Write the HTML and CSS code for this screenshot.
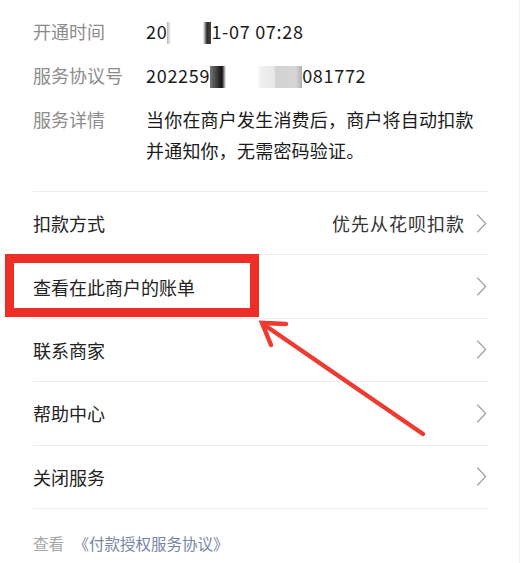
FILE: index.html
```html
<!DOCTYPE html>
<html>
<head>
  <meta charset="UTF-8">
  <title>服务详情</title>
  <link rel="stylesheet" href="styles.css">
</head>
<body>
  <div class="page">
    <div class="info">
      <div class="info-row">
        <span class="info-label">开通时间</span>
        <span class="info-value num">20<span class="mask mask-date"></span>1-07 07:28</span>
      </div>
      <div class="info-row">
        <span class="info-label">服务协议号</span>
        <span class="info-value num">202259<span class="mask mask-dark"></span><span class="mask mask-light"></span>081772</span>
      </div>
      <div class="info-row">
        <span class="info-label">服务详情</span>
        <span class="info-value">当你在商户发生消费后，商户将自动扣款并通知你，无需密码验证。</span>
      </div>
    </div>

    <div class="menu">
      <div class="menu-item">
        <span class="menu-title">扣款方式</span>
        <span class="menu-extra">优先从花呗扣款</span>
        <svg class="chevron" viewBox="0 0 12 22"><path d="M1.5 1.5 L10.5 11 L1.5 20.5"/></svg>
      </div>
      <div class="menu-item">
        <span class="menu-title">查看在此商户的账单</span>
        <svg class="chevron" viewBox="0 0 12 22"><path d="M1.5 1.5 L10.5 11 L1.5 20.5"/></svg>
      </div>
      <div class="menu-item">
        <span class="menu-title">联系商家</span>
        <svg class="chevron" viewBox="0 0 12 22"><path d="M1.5 1.5 L10.5 11 L1.5 20.5"/></svg>
      </div>
      <div class="menu-item">
        <span class="menu-title">帮助中心</span>
        <svg class="chevron" viewBox="0 0 12 22"><path d="M1.5 1.5 L10.5 11 L1.5 20.5"/></svg>
      </div>
      <div class="menu-item">
        <span class="menu-title">关闭服务</span>
        <svg class="chevron" viewBox="0 0 12 22"><path d="M1.5 1.5 L10.5 11 L1.5 20.5"/></svg>
      </div>
    </div>

    <div class="footer">
      <span class="footer-text">查看</span>
      <span class="footer-link">《付款授权服务协议》</span>
    </div>

    <!-- 标注 -->
    <div class="highlight-box"></div>
    <svg class="arrow" width="520" height="563" viewBox="0 0 520 563">
      <path d="M423 434 L263 324" />
      <path d="M286 324 L262 323 L271 345" />
    </svg>
  </div>
</body>
</html>
```

FILE: styles.css
```css
body {
  margin: 0;
  background-color: #ffffff;
  font-family: "Noto Sans CJK SC", "Noto Sans", sans-serif;
}

.page {
  position: relative;
  width: 520px;
  height: 563px;
  overflow: hidden;
  padding: 0 31px 0 33px;
  box-sizing: border-box;
  border-right: 1px solid #f4f4f4;
}

.info {
  padding-top: 16px;
  padding-bottom: 25px;
}

.info-row {
  display: flex;
  font-size: 18px;
  line-height: 31px;
  margin-bottom: 13px;
}

.info-row:last-child {
  margin-bottom: 0;
}

.info-label {
  width: 113px;
  flex-shrink: 0;
  color: #8c8c8c;
}

.info-value {
  flex: 1;
  color: #1a1a1a;
  letter-spacing: 0.2px;
}

.info-value.num {
  letter-spacing: 0.7px;
}

.mask {
  display: inline-block;
  vertical-align: middle;
  height: 22px;
  margin-top: -3px;
}

.mask-date {
  width: 44px;
  background: linear-gradient(to right, rgba(40,40,40,0.35) 0, #fff 4px, #fff 36px, rgba(20,20,20,0.9) 40px, #444 44px);
}

.mask-dark {
  width: 16px;
  background: linear-gradient(to right, rgba(30,30,30,0.6), #111 12px, #fff 16px);
}

.mask-light {
  width: 76px;
  background: linear-gradient(to right, #fff 0, #fff 32px, #f0f0f0 34px, #e8e8e8 48px, #d2d2d2 50px, #d6d6d6 70px, #b0b0b0 76px);
}

.menu {
  border-top: 1px solid #ebebeb;
}

.menu-item {
  display: flex;
  align-items: center;
  height: 62.4px;
  border-bottom: 1px solid #ebebeb;
  font-size: 18px;
  color: #222222;
}

.menu-title {
  flex: 1;
}

.menu-extra {
  color: #333333;
  margin-right: 11px;
  letter-spacing: 1px;
}

.chevron {
  width: 11px;
  height: 21px;
  fill: none;
  stroke: #a3a3a3;
  stroke-width: 1.4;
  margin-right: 1px;
}

.footer {
  padding-top: 23px;
  font-size: 15.5px;
}

.footer-text {
  color: #a6a6a6;
  margin-right: 6px;
}

.footer-link {
  color: #7586a6;
}

.highlight-box {
  position: absolute;
  left: 5px;
  top: 254px;
  width: 236px;
  height: 45px;
  border: 9px solid #ee2f28;
}

.arrow {
  position: absolute;
  left: 0;
  top: 0;
  fill: none;
  stroke: #ee3a30;
  stroke-width: 4.5;
  stroke-linecap: round;
  stroke-linejoin: miter;
}
```
